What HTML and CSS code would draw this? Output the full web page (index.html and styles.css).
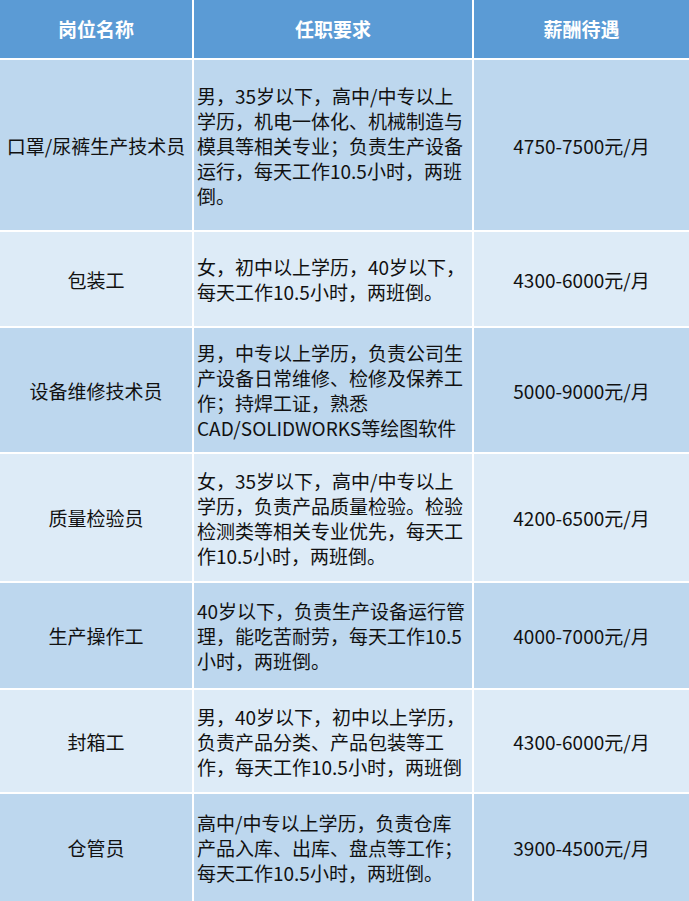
FILE: index.html
```html
<!DOCTYPE html>
<html lang="zh-CN">
<head>
<meta charset="utf-8">
<title>岗位表</title>
<link rel="stylesheet" href="styles.css">
</head>
<body>
<div class="table">
  <div class="cell head">岗位名称</div>
  <div class="cell head">任职要求</div>
  <div class="cell head">薪酬待遇</div>

  <div class="cell dark name">口罩/尿裤生产技术员</div>
  <div class="cell dark req">男，35岁以下，高中/中专以上<br>学历，机电一体化、机械制造与<br>模具等相关专业；负责生产设备<br>运行，每天工作10.5小时，两班<br>倒。</div>
  <div class="cell dark pay">4750-7500元/月</div>

  <div class="cell light name">包装工</div>
  <div class="cell light req">女，初中以上学历，40岁以下，<br>每天工作10.5小时，两班倒。</div>
  <div class="cell light pay">4300-6000元/月</div>

  <div class="cell dark name">设备维修技术员</div>
  <div class="cell dark req">男，中专以上学历，负责公司生<br>产设备日常维修、检修及保养工<br>作；持焊工证，熟悉<br>CAD/SOLIDWORKS等绘图软件</div>
  <div class="cell dark pay">5000-9000元/月</div>

  <div class="cell light name">质量检验员</div>
  <div class="cell light req">女，35岁以下，高中/中专以上<br>学历，负责产品质量检验。检验<br>检测类等相关专业优先，每天工<br>作10.5小时，两班倒。</div>
  <div class="cell light pay">4200-6500元/月</div>

  <div class="cell dark name">生产操作工</div>
  <div class="cell dark req">40岁以下，负责生产设备运行管<br>理，能吃苦耐劳，每天工作10.5<br>小时，两班倒。</div>
  <div class="cell dark pay">4000-7000元/月</div>

  <div class="cell light name">封箱工</div>
  <div class="cell light req">男，40岁以下，初中以上学历，<br>负责产品分类、产品包装等工<br>作，每天工作10.5小时，两班倒</div>
  <div class="cell light pay">4300-6000元/月</div>

  <div class="cell dark name">仓管员</div>
  <div class="cell dark req">高中/中专以上学历，负责仓库<br>产品入库、出库、盘点等工作；<br>每天工作10.5小时，两班倒。</div>
  <div class="cell dark pay">3900-4500元/月</div>
</div>
</body>
</html>
```
FILE: styles.css
```css
html, body {
  margin: 0;
  padding: 0;
  background: #ffffff;
}

body {
  width: 689px;
  height: 901px;
  overflow: hidden;
  font-family: "Noto Sans CJK SC", "Noto Sans", sans-serif;
  font-size: 19px;
  line-height: 25px;
  color: #111111;
}

.table {
  display: grid;
  grid-template-columns: 192px 278px 215px;
  grid-template-rows: 58px 170px 94px 124px 127px 105px 102px 107px;
  gap: 2px;
  background: #ffffff;
}

.cell {
  display: flex;
  align-items: center;
  white-space: nowrap;
}

.head {
  background: #5b9bd5;
  color: #ffffff;
  font-weight: bold;
  justify-content: center;
  padding-bottom: 2px;
}

.dark {
  background: #bdd7ee;
}

.light {
  background: #ddebf7;
}

.name, .pay {
  justify-content: center;
}

.req {
  padding-left: 3px;
}
```
